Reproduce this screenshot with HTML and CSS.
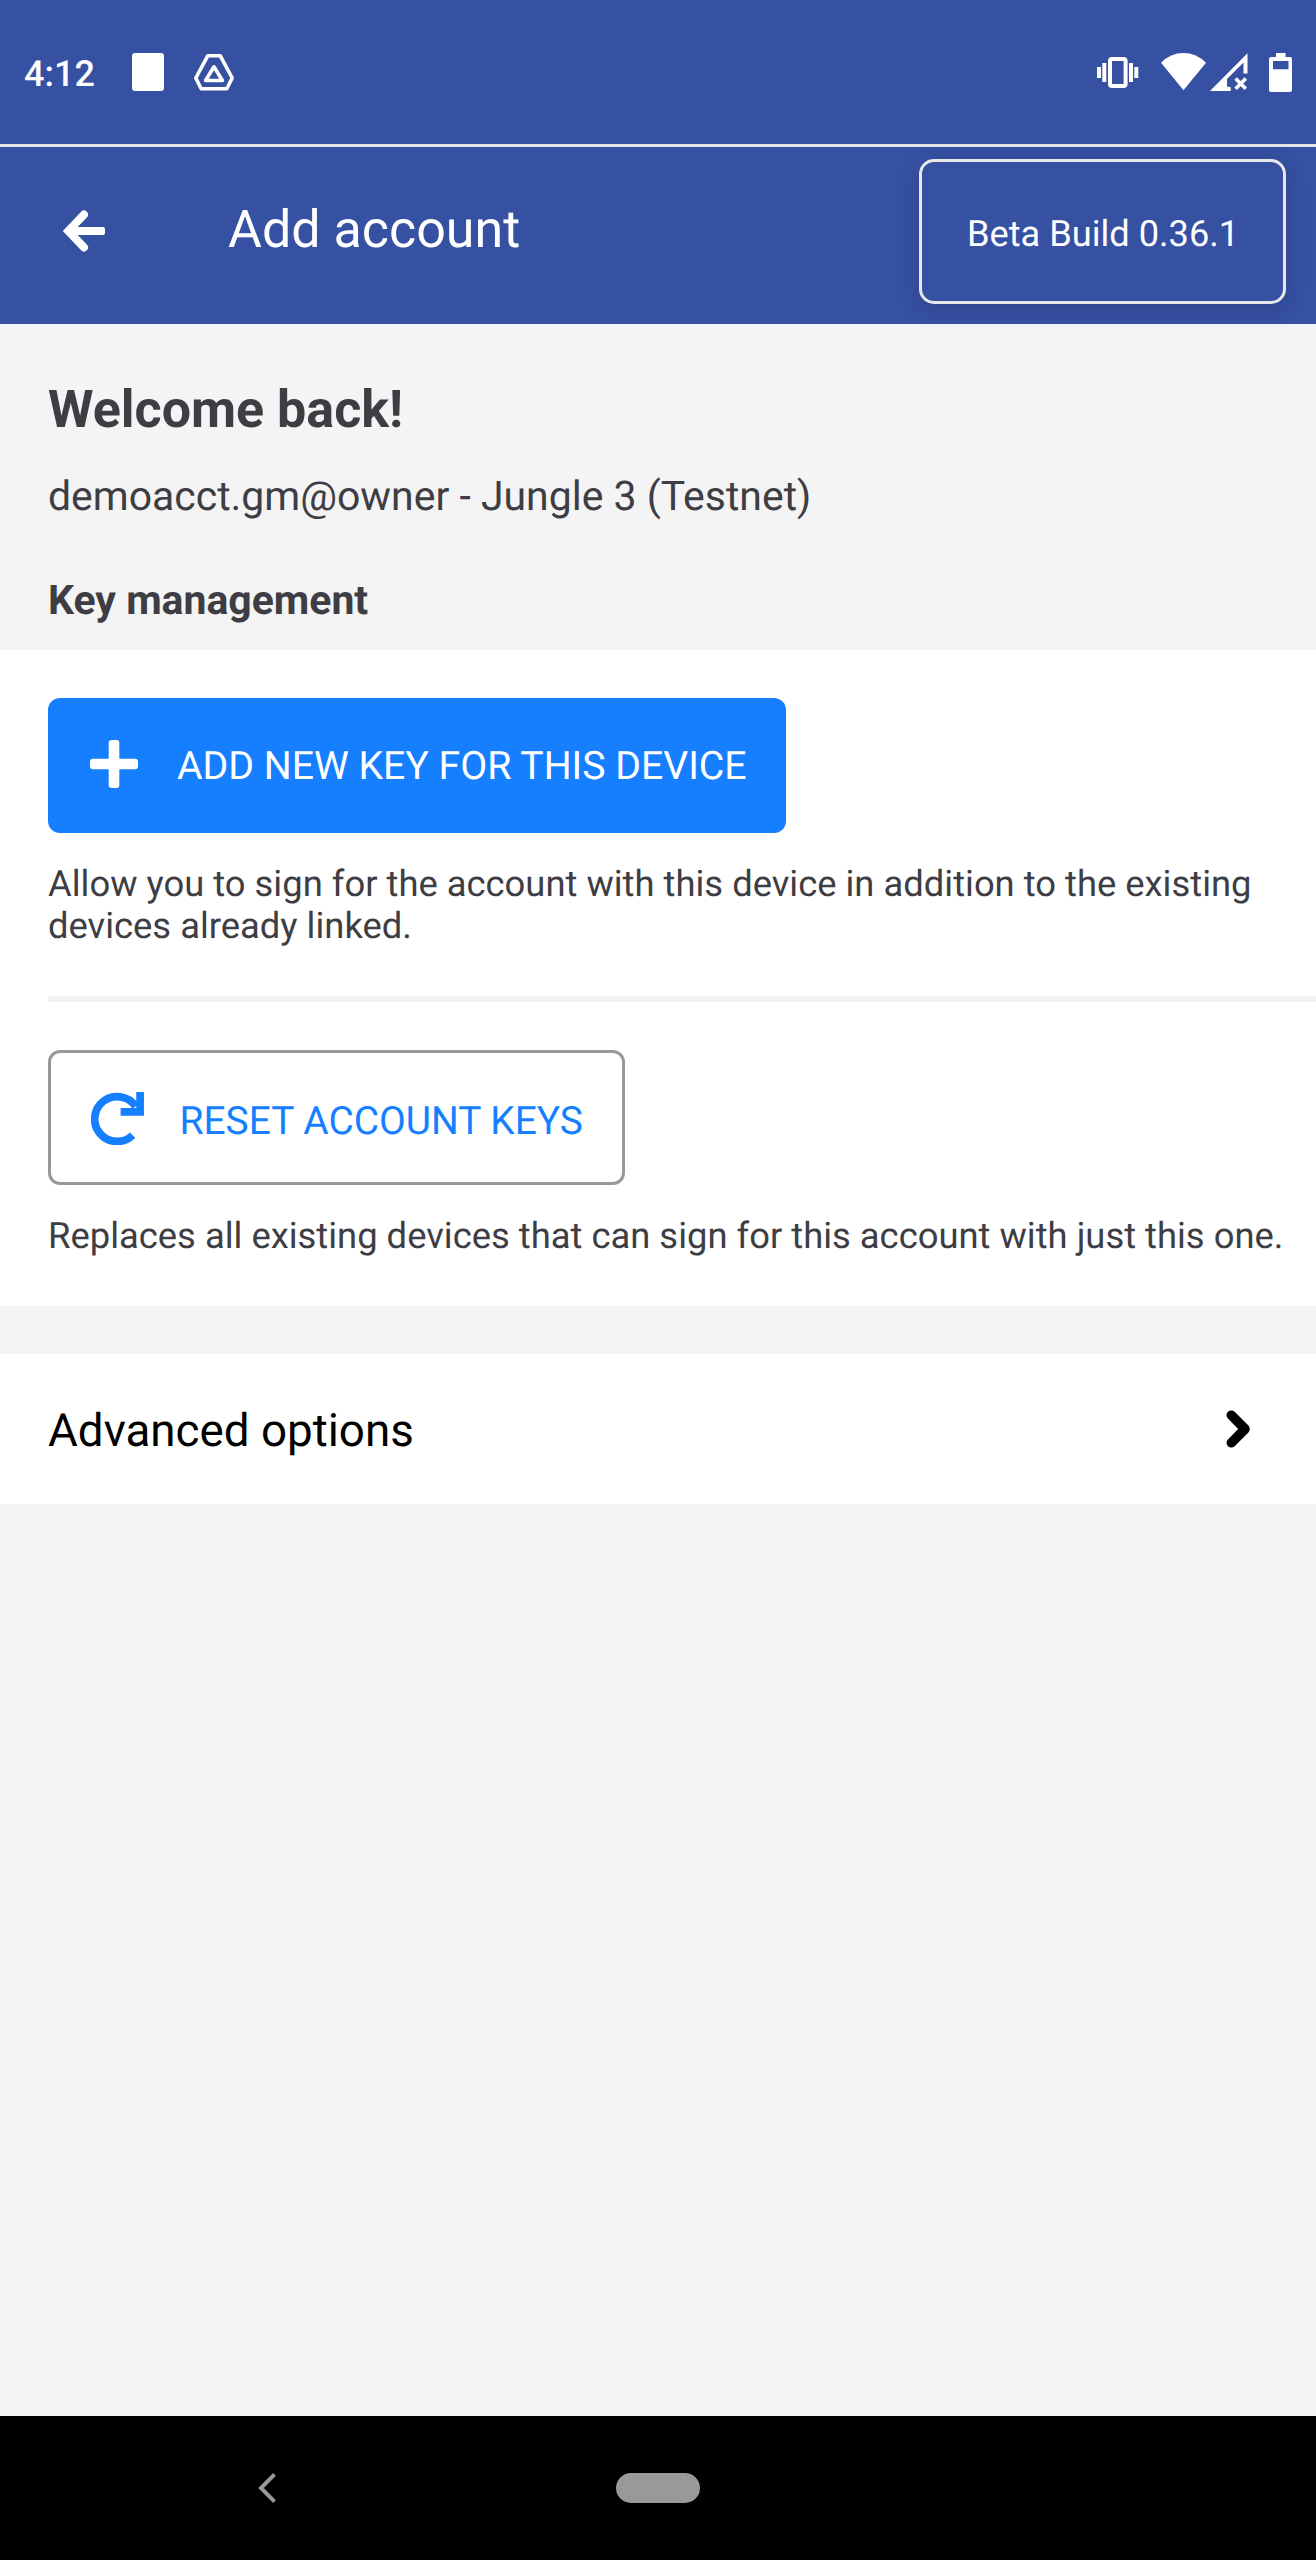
FILE: index.html
```
<!DOCTYPE html>
<html lang="en">
<head>
<meta charset="utf-8">
<title>Add account</title>
<link rel="stylesheet" href="styles.css">
</head>
<body>
<div class="screen">
  <div class="status-bar">
    <span class="clock">4:12</span>
    <span class="notice"></span>
    <svg class="drive" width="41" height="37" viewBox="0 0 41 37" fill="none" stroke="#fff" stroke-linejoin="round">
      <path d="M13.7 1.8H26.3L38.2 24 32.8 34.7H7.2L1.8 24Z" stroke-width="3.6"/>
      <path d="M20 12.8L28.4 26.5H11.6Z" stroke-width="3.6"/>
    </svg>
    <svg class="vibrate" width="42" height="31" viewBox="0 0 42 31" fill="#fff">
      <path d="M0 10h4v11H0zM5.3 6h4v19h-4zM32 6h4v19h-4zM37.3 10h4v11h-4z"/>
      <rect x="13" y="2" width="15.6" height="27" rx="2" fill="none" stroke="#fff" stroke-width="4"/>
    </svg>
    <svg class="wifi" width="45" height="38" viewBox="0 0 45 38" fill="#fff">
      <path d="M0 9.8Q9.5 0 22.5 0T45 9.8L22.5 37.2Z"/>
    </svg>
    <svg class="signal" width="38" height="38" viewBox="0 0 38 38" fill="#fff">
      <path d="M0 38L37.5 .2V20.5H33.5V9.5L17 26V33.5L20.7 34.2V38Z"/>
      <path d="M25.6 25.6L35.8 35.8M35.8 25.6L25.6 35.8" stroke="#fff" stroke-width="3.6"/>
    </svg>
    <svg class="battery" width="23" height="39" viewBox="0 0 23 39" fill="#fff" fill-rule="evenodd">
      <path d="M7 0h9.5v4H21a2 2 0 0 1 2 2v31a2 2 0 0 1-2 2H2a2 2 0 0 1-2-2V6a2 2 0 0 1 2-2h5zM4 8v8.3h15.5V8z"/>
    </svg>
  </div>

  <header class="header">
    <svg class="back" width="42" height="42" viewBox="0 0 42 42" fill="none" stroke="#fff" stroke-width="8">
      <path d="M21 4.6L5.2 21 21 37.4" stroke-linecap="round"/>
      <path d="M8 21H38" />
      <path d="M36 19V23H40V19Z" stroke-width="4" stroke-linejoin="round"/>
    </svg>
    <h1 class="title">Add account</h1>
    <div class="build">Beta Build 0.36.1</div>
  </header>

  <main class="content">
    <section class="intro">
      <h2 class="welcome">Welcome back!</h2>
      <p class="account">demoacct.gm@owner - Jungle 3 (Testnet)</p>
      <h3 class="section-title">Key management</h3>
    </section>

    <section class="panel">
      <button class="button primary">
        <svg width="48" height="48" viewBox="0 0 48 48" fill="#fff">
          <rect x="18.7" y="0" width="10.6" height="48" rx="3"/>
          <rect x="0" y="18.8" width="48" height="10.4" rx="3"/>
        </svg>
        <span>ADD NEW KEY FOR THIS DEVICE</span>
      </button>
      <p class="hint">Allow you to sign for the account with this device in addition to the existing<br>devices already linked.</p>
      <div class="divider"></div>
      <button class="button outline">
        <svg width="53" height="53" viewBox="0 0 53 53" fill="none" stroke="#157fff">
          <path d="M44.6 14.5A22.4 22.4 0 1 0 41.6 43.2" stroke-width="7.8"/>
          <path d="M29.6 19.8H49.1V0" stroke-width="7.7"/>
        </svg>
        <span>RESET ACCOUNT KEYS</span>
      </button>
      <p class="hint">Replaces all existing devices that can sign for this account with just this one.</p>
    </section>

    <section class="row">
      <span class="row-label">Advanced options</span>
      <svg width="25" height="38" viewBox="0 0 25 38" fill="none" stroke="#000" stroke-width="9.6" stroke-linecap="round" stroke-linejoin="round">
        <path d="M6.3 5.2L20 19 6.3 32.8"/>
      </svg>
    </section>
  </main>

  <nav class="nav-bar">
    <svg width="18" height="30" viewBox="0 0 18 30" fill="none" stroke="#999" stroke-width="4">
      <path d="M16.5 1.4L3 15 16.5 28.6"/>
    </svg>
    <span class="home-pill"></span>
  </nav>
</div>
</body>
</html>
```
FILE: styles.css
```
* {
  box-sizing: border-box;
}

body {
  margin: 0;
  background: #f4f4f4;
  color: #3d3d43;
  font-family: Roboto, "Liberation Sans", sans-serif;
  text-rendering: geometricPrecision;
}

h1, h2, h3, p {
  margin: 0;
}

svg {
  display: block;
  flex: none;
}

.screen {
  display: flex;
  flex-direction: column;
  width: 1316px;
  height: 2560px;
}

.status-bar {
  display: flex;
  align-items: center;
  flex: none;
  height: 147px;
  padding: 0 24px;
  border-bottom: 3px solid #e4e4e2;
  background: #3650a2;
}

.clock {
  width: 108px;
  padding-top: 3px;
  color: #fff;
  font-size: 36px;
  font-weight: 500;
  line-height: 44px;
}

.notice {
  width: 32px;
  height: 38px;
  border-radius: 3px;
  background: #fff;
}

.drive {
  margin-left: 30px;
}

.vibrate {
  margin: 0 22px 0 auto;
}

.signal {
  margin: 0 21px 0 4px;
}

.header {
  display: flex;
  align-items: center;
  flex: none;
  height: 177px;
  padding: 0 30px 0 63px;
  background: #3650a2;
  color: #fff;
}

.back {
  margin-bottom: 9px;
}

.title {
  margin: 0 auto 12px 123px;
  font-size: 52px;
  font-weight: 400;
  line-height: 62px;
}

.build {
  width: 367px;
  height: 145px;
  margin-bottom: 8px;
  padding: 48px 0 0 45px;
  border: 3px solid #e8e8e8;
  border-radius: 15px;
  font-size: 36.2px;
  line-height: 48px;
  white-space: nowrap;
  box-shadow: 0 5px 22px rgba(0, 0, 0, 0.14);
}

.content {
  flex: 1;
}

.intro {
  padding: 56px 48px 26px;
}

.welcome {
  font-size: 52px;
  font-weight: 700;
  line-height: 60px;
}

.account {
  margin-top: 32px;
  font-size: 40.95px;
  line-height: 48px;
}

.section-title {
  margin-top: 56px;
  font-size: 40.95px;
  font-weight: 700;
  line-height: 48px;
}

.panel {
  padding: 48px 0 49px 48px;
  background: #fff;
}

.button {
  display: flex;
  align-items: center;
  height: 135px;
  border: 0;
  border-radius: 12px;
  font-family: inherit;
  line-height: 48px;
  white-space: nowrap;
  text-rendering: inherit;
}

.primary {
  gap: 39px;
  width: 738px;
  padding: 0 0 0 42px;
  background: #157fff;
  color: #fff;
  font-size: 39.2px;
}

.primary svg {
  margin-bottom: 3px;
}

.outline {
  gap: 35.5px;
  width: 577px;
  padding: 0 0 0 40px;
  border: 3px solid #989898;
  background: #fff;
  color: #157fff;
  font-size: 38.9px;
}

.outline svg {
  margin-top: 2px;
}

.outline span {
  padding-top: 8px;
}

.hint {
  margin-top: 30px;
  font-size: 36.38px;
  line-height: 42px;
  white-space: nowrap;
}

.divider {
  height: 6px;
  margin: 49px 0 48px;
  background: #f0f0f5;
}

.row {
  display: flex;
  align-items: center;
  justify-content: space-between;
  height: 150px;
  margin-top: 48px;
  padding: 0 66px 0 48px;
  background: #fff;
  color: #000;
}

.row-label {
  padding-top: 6px;
  font-size: 45.75px;
  line-height: 54px;
}

.nav-bar {
  display: flex;
  align-items: center;
  flex: none;
  gap: 340px;
  height: 144px;
  padding-left: 258px;
  background: #000;
}

.home-pill {
  width: 84px;
  height: 30px;
  border-radius: 15px;
  background: #999;
}
```
